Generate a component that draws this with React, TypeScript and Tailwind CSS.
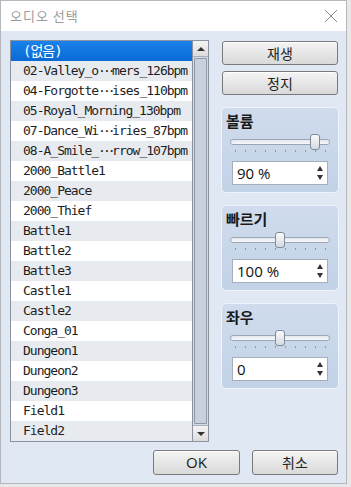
import React from 'react';

// names with a middle ellipsis are split into [head, tail]
const tracks: (string | [string, string])[] = [
  '(없음)',
  ['02-Valley_o', 'mers_126bpm'],
  ['04-Forgotte', 'ises_110bpm'],
  '05-Royal_Morning_130bpm',
  ['07-Dance_Wi', 'iries_87bpm'],
  ['08-A_Smile_', 'rrow_107bpm'],
  '2000_Battle1',
  '2000_Peace',
  '2000_Thief',
  'Battle1',
  'Battle2',
  'Battle3',
  'Castle1',
  'Castle2',
  'Conga_01',
  'Dungeon1',
  'Dungeon2',
  'Dungeon3',
  'Field1',
  'Field2',
];

const kr = { fontFamily: '"Noto Sans CJK KR", "Noto Sans", sans-serif' };
const mono = { fontFamily: '"DejaVu Sans Mono", "Noto Sans CJK KR", monospace' };
const seg = { fontFamily: '"Open Sans", "Liberation Sans", sans-serif' };

function Btn({ label, className = '' }: { label: string; className?: string }) {
  return (
    <button
      className={`h-[24px] flex items-center justify-center rounded-[3px] border border-[#7a7a7a] bg-gradient-to-b from-[#f4f4f4] to-[#d9d9d9] text-[14px] text-[#222] shadow-[inset_0_1px_0_#fff] ${className}`}
      style={kr}
    >
      {label}
    </button>
  );
}

function Group({ title, value, thumb }: { title: string; value: string; thumb: number }) {
  return (
    <div className="h-[86px] rounded-[5px] border border-[#edf3fa] bg-gradient-to-b from-[#d0dced] to-[#c2d2e7] flex flex-col">
      <div className="h-[20px] mt-[3px] pl-[4px] text-[15px] font-bold text-[#1a1a1a] leading-[20px]" style={kr}>
        {title}
      </div>
      {/* slider */}
      <div className="relative mx-[8px] h-[24px]">
        <div className="absolute left-0 right-0 top-[8px] h-[6px] rounded-full border border-[#9aa6b4] bg-gradient-to-b from-[#e4e8ee] to-[#f7f8fa]" />
        <div
          className="absolute top-[3px] w-[10px] h-[16px] rounded-[3px] border border-[#7f8a98] bg-gradient-to-b from-[#fafafa] to-[#d6dbe2]"
          style={{ left: thumb }}
        />
        <div className="absolute left-[5px] top-[19px] flex gap-[9px]">
          {Array.from({ length: 10 }).map((_, i) => (
            <div key={i} className="w-[1px] h-[2px] bg-[#8d9bab]" />
          ))}
        </div>
      </div>
      <div className="mx-[10px] mt-[6px] h-[24px] border border-[#a6aeb9] bg-white flex items-center justify-between pl-[4px] pr-[4px]">
        <span className="text-[15px] text-[#111]" style={seg}>
          {value}
        </span>
        <div className="flex flex-col items-center gap-[4px]">
          <div className="w-0 h-0 border-l-[3px] border-r-[3px] border-b-[5px] border-l-transparent border-r-transparent border-b-[#333]" />
          <div className="w-0 h-0 border-l-[3px] border-r-[3px] border-t-[5px] border-l-transparent border-r-transparent border-t-[#333]" />
        </div>
      </div>
    </div>
  );
}

export default function App() {
  return (
    <div className="w-[351px] h-[487px] bg-[#e8e8e8] overflow-hidden">
      <div className="w-[347px] h-[484px] border border-[#b4b8bd] flex flex-col">
        {/* title bar */}
        <div className="h-[30px] bg-white flex items-center justify-between pl-[9px] pr-[8px]">
          <span className="text-[13px] text-[#9c9c9c] tracking-[1px]" style={kr}>
            오디오 선택
          </span>
          <svg width="14" height="14" viewBox="0 0 14 14">
            <path d="M1 1L13 13M13 1L1 13" stroke="#8a8a8a" strokeWidth="1" />
          </svg>
        </div>

        {/* body */}
        <div className="flex-1 bg-[#dfe8f3] pl-[9px] pr-[7px] pt-[9px] flex flex-col">
          <div className="flex gap-[12px]">
            {/* list box */}
            <div className="w-[199px] h-[402px] border border-[#8a939e] bg-white flex">
              <div className="flex-1 flex flex-col">
                {tracks.map((t, i) => (
                  <div
                    key={i}
                    className={`h-[20px] flex items-center pl-[12px] tracking-[-1px] whitespace-nowrap ${
                      i === 0
                        ? 'bg-gradient-to-b from-[#1a82ea] to-[#0a6ad6] text-white text-[14px]'
                        : i % 2 === 1
                        ? 'bg-[#e7ebf0] text-[#1e1e1e] text-[13px]'
                        : 'bg-white text-[#1e1e1e] text-[13px]'
                    }`}
                    style={mono}
                  >
                    {typeof t === 'string' ? (
                      t
                    ) : (
                      <>
                        {t[0]}
                        <span className="inline-block w-[14px] text-center tracking-[-3px]">···</span>
                        {t[1]}
                      </>
                    )}
                  </div>
                ))}
              </div>
              {/* scrollbar */}
              <div className="w-[16px] border-l border-[#8a939e] bg-[#d3dbe4] flex flex-col">
                <div className="h-[16px] flex items-center justify-center bg-gradient-to-b from-[#f4f4f4] to-[#dcdcdc] border-b border-[#a8b0ba]">
                  <div className="w-0 h-0 border-l-[4px] border-r-[4px] border-b-[4px] border-l-transparent border-r-transparent border-b-[#333]" />
                </div>
                <div className="flex-1 mx-[1px] my-[1px] rounded-[1px] border border-[#8e9aa8] bg-[#c7d2de]" />
                <div className="h-[16px] flex items-center justify-center bg-gradient-to-b from-[#f4f4f4] to-[#dcdcdc] border-t border-[#a8b0ba]">
                  <div className="w-0 h-0 border-l-[4px] border-r-[4px] border-t-[4px] border-l-transparent border-r-transparent border-t-[#333]" />
                </div>
              </div>
            </div>

            {/* right column */}
            <div className="w-[118px] flex flex-col pt-[1px]">
              <Btn label="재생" className="mx-[1px]" />
              <Btn label="정지" className="mx-[1px] mt-[6px]" />
              <div className="mt-[12px] flex flex-col gap-[12px]">
                <Group title="볼륨" value="90 %" thumb={80} />
                <Group title="빠르기" value="100 %" thumb={45} />
                <Group title="좌우" value="0" thumb={45} />
              </div>
            </div>
          </div>

          {/* footer */}
          <div className="flex justify-end gap-[12px] mt-[8px] pr-[1px]">
            <button
              className="w-[87px] h-[25px] rounded-[3px] border border-[#7a7a7a] bg-gradient-to-b from-[#f4f4f4] to-[#d9d9d9] text-[15px] font-medium text-[#222] shadow-[inset_0_1px_0_#fff]"
              style={seg}
            >
              OK
            </button>
            <Btn label="취소" className="w-[86px] h-[25px]" />
          </div>
        </div>
      </div>
    </div>
  );
}
